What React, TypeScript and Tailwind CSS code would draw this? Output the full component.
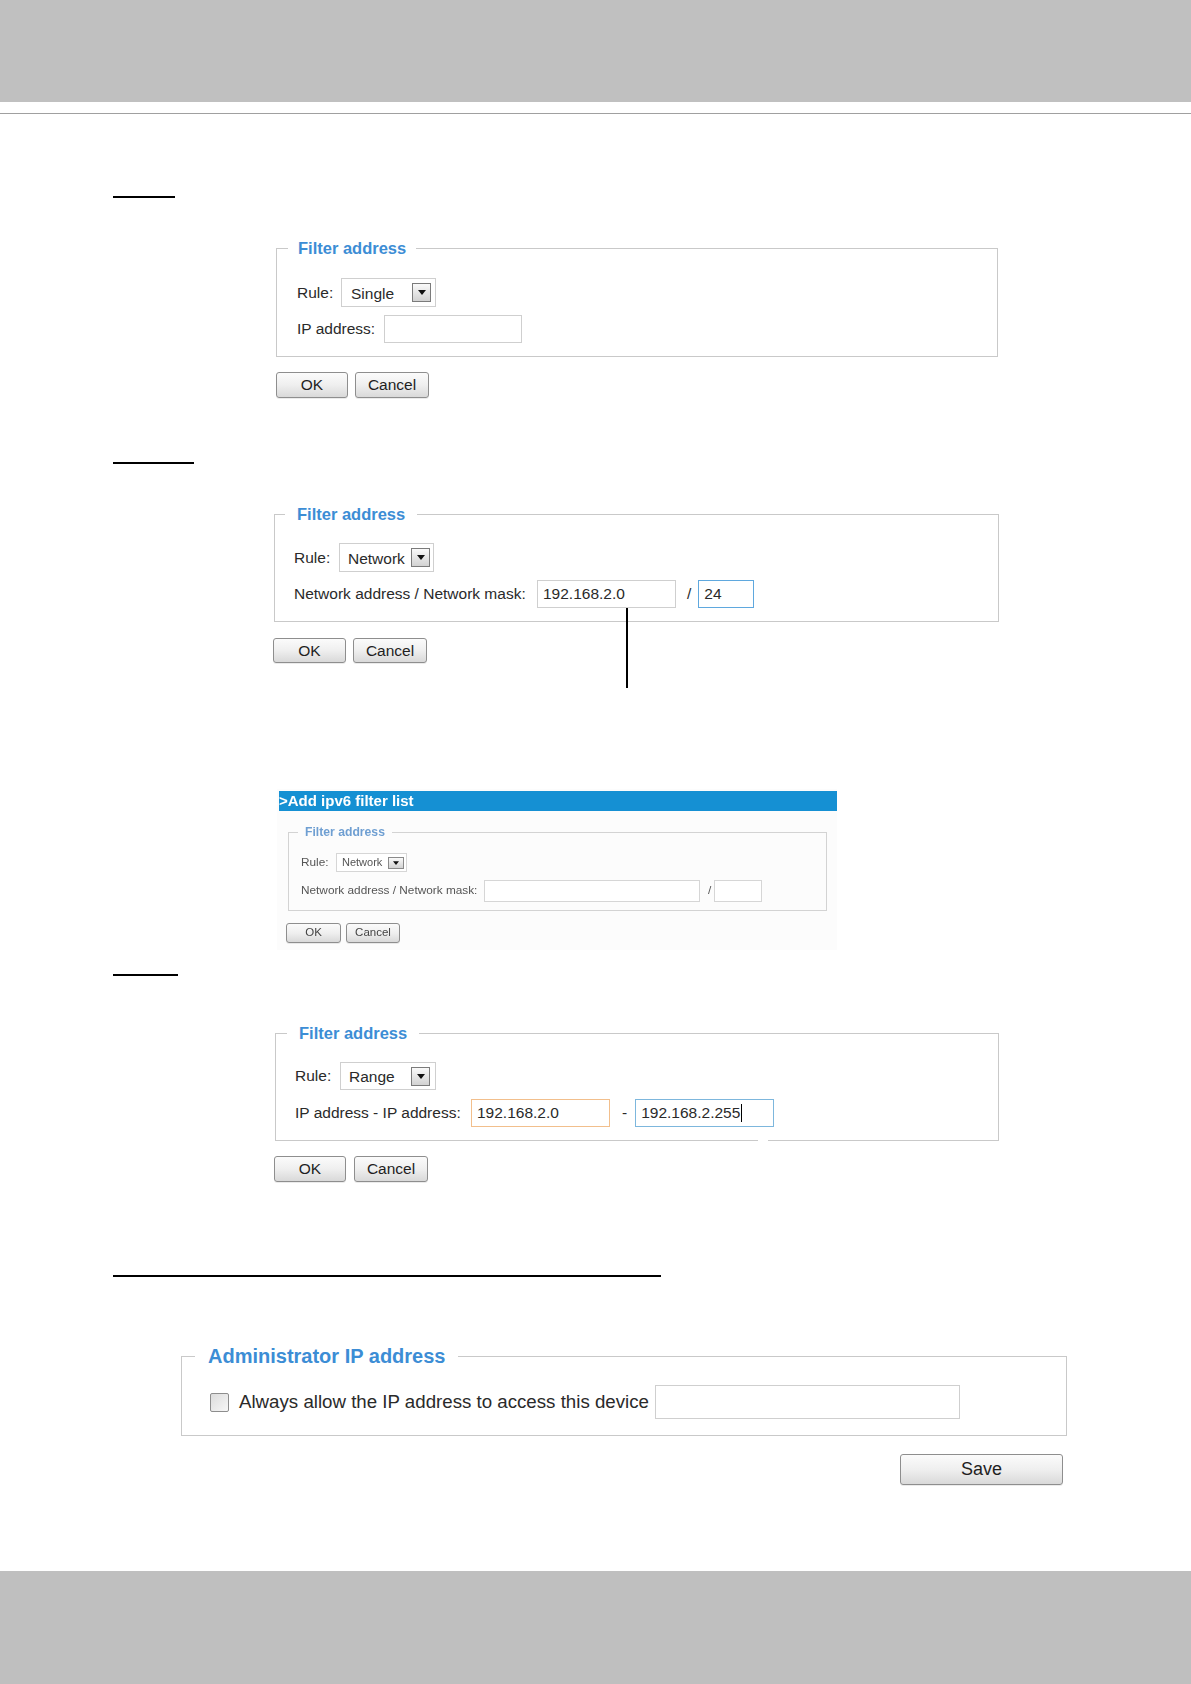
import React from 'react';

type BoxProps = { className: string; children?: React.ReactNode };

// grey push button as drawn by the camera web UI
const Btn = ({ className, children }: BoxProps) => (
  <div
    className={`flex items-center justify-center rounded-[3px] border border-[#8e8e8e] bg-linear-to-b from-[#fbfbfb] via-[#efefef] to-[#d9d9d9] text-[#1f1f1f] shadow-[0_1px_0_rgba(0,0,0,0.08)] ${className}`}
  >
    {children}
  </div>
);

const Caret = ({ small }: { small?: boolean }) => (
  <span
    className={
      small
        ? 'flex h-[12px] w-[16px] items-center justify-center border border-[#8a8a8a] bg-linear-to-b from-[#fafafa] to-[#d2d2d2]'
        : 'flex h-[19px] w-[19px] items-center justify-center border border-[#7b7b7b] bg-linear-to-b from-[#fafafa] to-[#d2d2d2]'
    }
  >
    <svg width={small ? 6 : 8} height={small ? 4 : 5} viewBox="0 0 8 5">
      <path d="M0 0h8L4 5z" fill="#111" />
    </svg>
  </span>
);

const Select = ({ className, value, small }: { className: string; value: string; small?: boolean }) => (
  <div className={`flex items-center justify-between border border-[#cfcfcf] bg-white ${className}`}>
    <span className="pt-[2px]">{value}</span>
    <Caret small={small} />
  </div>
);

const Field = ({ className, children }: BoxProps) => (
  <div className={`flex items-center border bg-white pl-[5px] ${className}`}>{children}</div>
);

const Legend = ({ className, children }: BoxProps) => (
  <legend className={`font-bold text-[#3c8dd5] ${className}`}>{children}</legend>
);

export default function App() {
  return (
    <div className="flex min-h-[1684px] w-[1191px] flex-col bg-white font-['Liberation_Sans',Arial,sans-serif] text-[15.5px] text-[#2a2a2a]">
      <div className="h-[102px] bg-[#c0c0c0]" />
      <div className="mt-[11px] h-px bg-[#a0a0a0]" />

      <main className="flex flex-col items-start pl-[113px]">
        {/* Single */}
        <div className="mt-[82px] h-[2px] w-[62px] bg-black" />
        <fieldset className="ml-[163px] mt-[40px] w-[722px] border border-[#c9c9c9]">
          <Legend className="ml-[11px] px-[10px] text-[16.5px] leading-[20px]">Filter address</Legend>
          <div className="flex flex-col gap-[8px] pb-[13px] pl-[20px] pt-[20px]">
            <div className="flex h-[29px] items-center">
              <span className="w-[44px] leading-none">Rule:</span>
              <Select className="h-[29px] w-[95px] pl-[9px] pr-[4px]" value="Single" />
            </div>
            <div className="flex h-[28px] items-center">
              <span className="w-[87px] leading-none">IP address:</span>
              <Field className="h-[28px] w-[138px] border-[#cfcfcf]" />
            </div>
          </div>
        </fieldset>
        <div className="ml-[163px] mt-[15px] flex gap-[7px]">
          <Btn className="h-[26px] w-[72px]">OK</Btn>
          <Btn className="h-[26px] w-[74px]">Cancel</Btn>
        </div>

        {/* Network */}
        <div className="mt-[64px] h-[2px] w-[81px] bg-black" />
        <fieldset className="ml-[161px] mt-[40px] w-[725px] border border-[#c9c9c9]">
          <Legend className="ml-[10px] px-[12px] text-[16.5px] leading-[20px]">Filter address</Legend>
          <div className="flex flex-col gap-[8px] pb-[13px] pl-[19px] pt-[19px]">
            <div className="flex h-[29px] items-center">
              <span className="w-[45px] leading-none">Rule:</span>
              <Select className="h-[29px] w-[95px] pl-[8px] pr-[3px]" value="Network" />
            </div>
            <div className="flex h-[28px] items-center">
              <span className="w-[243px] whitespace-nowrap leading-none">Network address / Network mask:</span>
              <div className="relative">
                <Field className="h-[28px] w-[139px] border-[#cfcfcf]">192.168.2.0</Field>
                <div className="absolute left-[89px] top-full h-[80px] w-[2px] bg-black" />
              </div>
              <span className="ml-[11px] mr-[7px] leading-none">/</span>
              <Field className="h-[28px] w-[56px] border-[#5fa8de]">24</Field>
            </div>
          </div>
        </fieldset>
        <div className="ml-[160px] mt-[16px] flex gap-[7px]">
          <Btn className="h-[25px] w-[73px]">OK</Btn>
          <Btn className="h-[25px] w-[74px]">Cancel</Btn>
        </div>

        {/* IPv6 screenshot */}
        <div className="ml-[164px] mt-[126px] flex h-[161px] w-[560px] flex-col bg-[#fcfcfc] pl-[2px] pt-[2px] blur-[0.3px]">
          <div className="h-[20px] bg-[#1590d3] text-[15px] font-bold leading-[20px] text-white">&gt;Add ipv6 filter list</div>
          <fieldset className="ml-[9px] mt-[13px] w-[539px] border border-[#d3d3d3] text-[11.8px] text-[#555]">
            <legend className="ml-[9px] px-[7px] text-[12.2px] font-bold leading-[16px] text-[#6f9fd2]">Filter address</legend>
            <div className="flex flex-col gap-[8px] pb-[8px] pl-[12px] pt-[13px]">
              <div className="flex h-[19px] items-center">
                <span className="w-[35px] leading-none">Rule:</span>
                <div className="flex h-[19px] w-[71px] items-center justify-between border border-[#d6d6d6] bg-white pl-[5px] pr-[2px] text-[11px]">
                  <span>Network</span>
                  <Caret small />
                </div>
              </div>
              <div className="flex h-[22px] items-center">
                <span className="w-[183px] whitespace-nowrap leading-none">Network address / Network mask:</span>
                <div className="h-[22px] w-[216px] border border-[#d6d6d6] bg-white" />
                <span className="ml-[8px] mr-[3px] leading-none">/</span>
                <div className="h-[22px] w-[48px] border border-[#d6d6d6] bg-white" />
              </div>
            </div>
          </fieldset>
          <div className="ml-[7px] mt-[12px] flex gap-[5px] text-[11.5px]">
            <Btn className="h-[20px] w-[55px] text-[#444]">OK</Btn>
            <Btn className="h-[20px] w-[54px] text-[#444]">Cancel</Btn>
          </div>
        </div>

        {/* Range */}
        <div className="mt-[24px] h-[2px] w-[65px] bg-black" />
        <fieldset className="relative ml-[162px] mt-[47px] w-[724px] border border-[#c9c9c9]">
          <Legend className="ml-[11px] px-[12px] text-[16.5px] leading-[20px]">Filter address</Legend>
          <div className="flex flex-col gap-[9px] pb-[13px] pl-[19px] pt-[19px]">
            <div className="flex h-[28px] items-center">
              <span className="w-[45px] leading-none">Rule:</span>
              <Select className="h-[28px] w-[96px] pl-[8px] pr-[5px]" value="Range" />
            </div>
            <div className="flex h-[28px] items-center">
              <span className="w-[176px] whitespace-nowrap leading-none">IP address - IP address:</span>
              <Field className="h-[28px] w-[139px] border-[#f2bf8c]">192.168.2.0</Field>
              <span className="ml-[12px] mr-[8px] leading-none">-</span>
              <Field className="h-[28px] w-[139px] border-[#7db7dd]">
                192.168.2.255
                <span className="ml-px h-[18px] w-px bg-black" />
              </Field>
            </div>
          </div>
          <div className="absolute bottom-[-1px] left-[482px] h-[2px] w-[10px] bg-white" />
        </fieldset>
        <div className="ml-[161px] mt-[15px] flex gap-[8px]">
          <Btn className="h-[26px] w-[72px]">OK</Btn>
          <Btn className="h-[26px] w-[74px]">Cancel</Btn>
        </div>

        {/* Administrator IP address */}
        <div className="mt-[93px] h-[2px] w-[548px] bg-black" />
        <fieldset className="ml-[68px] mt-[67px] w-[886px] border border-[#c9c9c9]">
          <Legend className="ml-[13px] px-[13px] text-[20px] leading-[24px]">Administrator IP address</Legend>
          <div className="flex h-[34px] items-center pl-[28px]" style={{ boxSizing: 'content-box', paddingTop: 17, paddingBottom: 16 }}>
            <input
              type="checkbox"
              readOnly
              className="h-[19px] w-[19px] appearance-none rounded-[2px] border border-[#8d8d8d] bg-linear-to-br from-[#dcdcdc] to-[#f7f7f7]"
            />
            <span className="ml-[10px] w-[416px] whitespace-nowrap text-[18.7px] leading-none">
              Always allow the IP address to access this device
            </span>
            <div className="h-[34px] w-[305px] border border-[#cfcfcf] bg-white" />
          </div>
        </fieldset>
        <Btn className="ml-[787px] mt-[18px] h-[31px] w-[163px] text-[18px]">Save</Btn>
      </main>

      <footer className="mt-auto h-[113px] bg-[#bfbfbf]" />
    </div>
  );
}
